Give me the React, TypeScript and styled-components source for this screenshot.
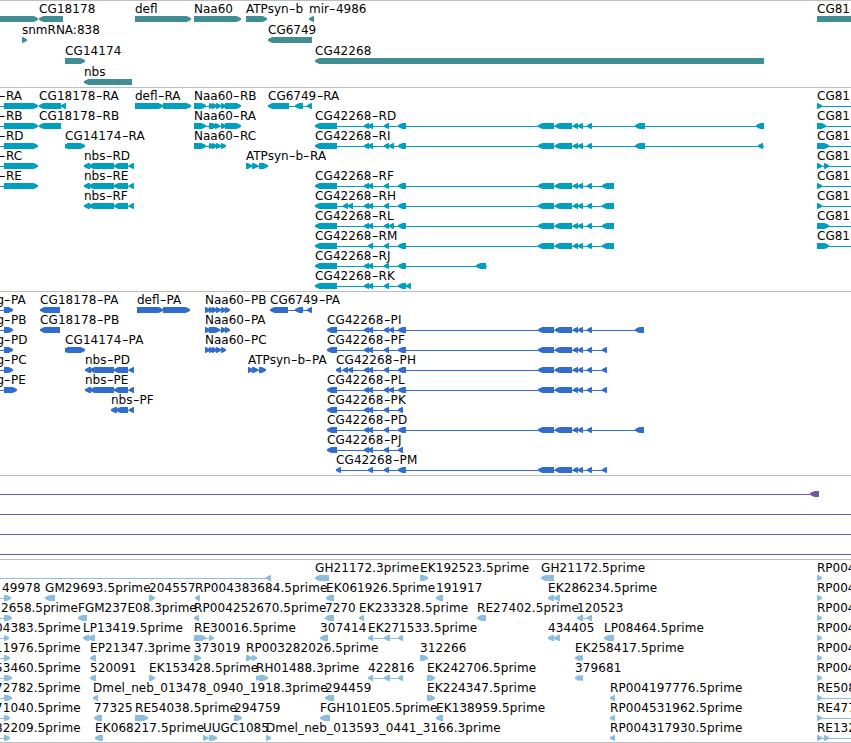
import { Fragment } from "react";
import styled, { createGlobalStyle } from "styled-components";

type Range = [number, number];

interface Feature {
  name?: string;
  strand: "+" | "-";
  exons: Range[];
  // where the label starts, when it is not at the first exon
  labelX?: number;
  // extent of the intron line, when it is longer than the exons
  span?: Range;
}

const VIEW_WIDTH = 851;

const GlobalStyle = createGlobalStyle`
  body {
    margin: 0;
    background: #ffffff;
    overflow: hidden;
  }
`;

const StyledBrowser = styled.main`
  display: flex;
  flex-direction: column;
  width: ${VIEW_WIDTH}px;
  height: 743px;
  overflow: hidden;
  box-sizing: border-box;
  border-bottom: 1px solid #bebebe;
  background: #ffffff;
  font-family: "DejaVu Sans", sans-serif;
  font-size: 12px;
  color: #000000;
`;

const StyledTrack = styled.section<{ $height: number; $color: string }>`
  display: flex;
  flex-direction: column;
  flex: none;
  box-sizing: border-box;
  height: ${(props) => props.$height}px;
  border-top: 1px solid #bebebe;
  color: ${(props) => props.$color};
`;

const StyledRow = styled.div<{ $height: number }>`
  flex: none;
  height: ${(props) => props.$height}px;
`;

const StyledLabels = styled.div`
  position: relative;
  height: 15px;
`;

const StyledLabel = styled.span<{ $x: number; $spacing: number }>`
  position: absolute;
  left: ${(props) => props.$x}px;
  top: 1px;
  line-height: 15px;
  white-space: nowrap;
  letter-spacing: ${(props) => props.$spacing}px;
  color: #000000;
`;

const StyledHyphen = styled.span`
  display: inline-block;
  margin: 0 1.3px;
  transform: scaleX(1.5);
`;

const StyledGlyphs = styled.svg`
  display: block;
  width: 100%;
  height: 5px;
  overflow: visible;
  fill: currentColor;
`;

const minus = (name: string, exons: Range[], extra = {}): Feature => ({
  name,
  strand: "-",
  exons,
  ...extra,
});

const plus = (name: string, exons: Range[], extra = {}): Feature => ({
  name,
  strand: "+",
  exons,
  ...extra,
});

const genes: Feature[][] = [
  [
    plus("", [[-20, 38]]),
    minus("CG18178", [[39, 63]]),
    plus("defl", [[135, 191]]),
    plus("Naa60", [[194, 241]]),
    plus("ATPsyn-b", [[246, 267]]),
    minus("mir-4986", [[309, 314]]),
    plus("CG81", [[817, 880]]),
  ],
  [plus("snmRNA:838", [[22, 27]]), minus("CG6749", [[268, 312]])],
  [plus("CG14174", [[65, 85]]), minus("CG42268", [[315, 764]])],
  [minus("nbs", [[84, 132]])],
];

// exon groups that the CG42268 isoforms share
const pair: Range[] = [[364, 369], [368, 373]];
const single: Range[] = [[384, 389]];
const double: Range[] = [[384, 389], [389, 394]];
const wide: Range[] = [[398, 406]];
const cluster: Range[] = [[538, 554], [555, 572], [573, 578], [578, 583], [587, 592]];
const utr: Range[] = [[315, 337]];
const cds: Range[] = [[327, 337]];
const twin: Range[] = [[343, 348], [348, 353]];

const nbsR: Range[] = [[84, 90], [89, 114], [114, 128], [129, 134]];
const nbsP: Range[] = [[85, 91], [90, 114], [114, 128], [129, 134]];
const naaSmall: Range[] = [[209, 214], [212, 217], [216, 221], [221, 226]];

const left = (name: string, end: number, labelX: number): Feature =>
  plus(name, [[4, end]], { labelX, span: [0, end] });

const right = (name: string, exons: Range[]): Feature =>
  plus(name, exons, { span: [817, VIEW_WIDTH] });

const transcripts: Feature[][] = [
  [
    left("-RA", 38, -1),
    minus("CG18178-RA", [[39, 61], [61, 66]]),
    plus("defl-RA", [[135, 163], [163, 191]]),
    plus("Naa60-RB", [[194, 206], ...naaSmall, [225, 241]]),
    minus("CG6749-RA", [[268, 289], [295, 303], [307, 312]]),
    right("CG81", [[817, 822]]),
  ],
  [
    left("-RB", 38, -1),
    minus("CG18178-RB", [[39, 61]]),
    plus("Naa60-RA", [[194, 206], [209, 217], [215, 220], [221, 226], [225, 241]]),
    minus("CG42268-RD", [...utr, ...pair, ...single, ...wide, ...cluster, [635, 645], [756, 764]]),
    right("CG81", [[817, 826]]),
  ],
  [
    left("-RD", 38, -1),
    plus("CG14174-RA", [[65, 69], [67, 85]]),
    plus("Naa60-RC", [[194, 206], ...naaSmall]),
    minus("CG42268-RI", [...utr, ...pair, ...double, ...wide, ...cluster, [635, 645], [758, 763]], {
      span: [315, 764],
    }),
    right("CG81", [[817, 829]]),
  ],
  [
    left("-RC", 38, -1),
    minus("nbs-RD", nbsR),
    plus("ATPsyn-b-RA", [[246, 252], [252, 258], [259, 268]]),
    right("CG81", [[817, 822], [824, 829]]),
  ],
  [
    left("-RE", 38, -1),
    minus("nbs-RE", nbsR),
    minus("CG42268-RF", [...utr, ...pair, ...single, ...wide, ...cluster, [602, 614]]),
    right("CG81", [[817, 822]]),
  ],
  [
    minus("nbs-RF", nbsR),
    minus("CG42268-RH", [...utr, ...twin, ...pair, ...single, ...wide, ...cluster, [602, 614]]),
    right("CG81", [[817, 822]]),
  ],
  [
    minus("CG42268-RL", [...utr, ...pair, ...double, ...wide, ...cluster, [602, 614]]),
    right("CG81", [[817, 829]]),
  ],
  [
    minus("CG42268-RM", [...utr, [368, 373], ...single, ...wide, ...cluster, [602, 614]]),
    right("CG81", [[817, 829]]),
  ],
  [
    minus("CG42268-RJ", [...utr, ...pair, ...single, ...wide, [476, 486]], {
      span: [315, 487],
    }),
  ],
  [minus("CG42268-RK", [...utr, ...pair, ...single, ...wide, [406, 411]])],
];

const proteins: Feature[][] = [
  [
    left("g-PA", 13, -3.5),
    minus("CG18178-PA", [[40, 60]]),
    plus("defl-PA", [[137, 163], [163, 190]]),
    plus("Naa60-PB", [[205, 210], ...naaSmall, [225, 230]]),
    minus("CG6749-PA", [[270, 288], [295, 303], [307, 312]]),
  ],
  [
    left("g-PB", 13, -3.5),
    minus("CG18178-PB", [[40, 60]]),
    plus("Naa60-PA", [[205, 210], [209, 220], [221, 226], [225, 230]]),
    minus("CG42268-PI", [...cds, ...pair, ...double, ...wide, ...cluster, [635, 644]]),
  ],
  [
    left("g-PD", 13, -3.5),
    plus("CG14174-PA", [[65, 69], [67, 85]]),
    plus("Naa60-PC", [[205, 210], ...naaSmall]),
    minus("CG42268-PF", [...cds, ...pair, ...single, ...wide, ...cluster, [602, 607]]),
  ],
  [
    left("g-PC", 13, -3.5),
    minus("nbs-PD", nbsP),
    plus("ATPsyn-b-PA", [[248, 253], [252, 258], [259, 266]]),
    minus("CG42268-PH", [[336, 341], ...twin, ...pair, ...single, ...wide, ...cluster, [602, 607]]),
  ],
  [
    left("g-PE", 17, -3.5),
    minus("nbs-PE", nbsP),
    minus("CG42268-PL", [...cds, ...pair, ...double, ...wide, ...cluster, [602, 607]]),
  ],
  [
    minus("nbs-PF", [[111, 117], [116, 128], [129, 134]]),
    minus("CG42268-PK", [...cds, ...pair, ...single, [398, 403]]),
  ],
  [minus("CG42268-PD", [...cds, ...pair, ...single, ...wide, ...cluster, [635, 644]])],
  [minus("CG42268-PJ", [...cds, ...pair, ...single, [398, 403]])],
  [minus("CG42268-PM", [[336, 341], [368, 373], ...single, ...wide, ...cluster, [602, 607]])],
];

const wholeLine: Feature[] = [{ strand: "+", exons: [], span: [0, VIEW_WIDTH] }];

const insertions: Feature[][] = [
  [{ strand: "-", exons: [[810, 819]], span: [0, 819] }],
  wholeLine,
  wholeLine,
  wholeLine,
];

const ests: Feature[][] = [
  [
    { strand: "-", exons: [[266, 271]], span: [0, 271] },
    minus("GH21172.3prime", [[315, 329]]),
    plus("EK192523.5prime", [[420, 428]]),
    minus("GH21172.5prime", [[541, 554]]),
    plus("RP004", [[817, 822]]),
  ],
  [
    left("49978", 11, 2),
    minus("GM29693.5prime", [[45, 55]]),
    plus("204557", [[149, 155]]),
    minus("RP004383684.5prime", [[195, 200]]),
    minus("EK061926.5prime", [[326, 334]]),
    minus("191917", [[436, 443]]),
    minus("EK286234.5prime", [[548, 554], [554, 560]]),
    plus("RP004", [[817, 822]]),
  ],
  [
    left("2658.5prime", 12, 1),
    minus("FGM237E08.3prime", [[78, 87]]),
    minus("RP004252670.5prime", [[194, 199]]),
    minus("7270", [[325, 334]]),
    minus("EK233328.5prime", [[359, 364]]),
    minus("RE27402.5prime", [[477, 486]]),
    minus("120523", [[577, 583], [587, 592]]),
    plus("RP004", [[817, 822]]),
  ],
  [
    left("04383.5prime", 9, -5),
    minus("LP13419.5prime", [[83, 89], [88, 95]]),
    plus("RE30016.5prime", [[194, 206], [209, 214]]),
    minus("307414", [[320, 328]]),
    minus("EK271533.5prime", [[368, 373], [384, 390], [398, 403]]),
    minus("434405", [[548, 554], [554, 560]]),
    minus("LP08464.5prime", [[604, 614]]),
    plus("RP004", [[817, 822]]),
  ],
  [
    left("11976.5prime", 10, -5),
    minus("EP21347.3prime", [[90, 96]]),
    plus("373019", [[194, 201]]),
    plus("RP003282026.5prime", [[246, 252], [252, 257]]),
    plus("312266", [[420, 428]]),
    minus("EK258417.5prime", [[575, 580], [578, 583]]),
    plus("RP004", [[817, 822]]),
  ],
  [
    left("53460.5prime", 12, -5),
    minus("520091", [[90, 96]]),
    plus("EK153428.5prime", [[149, 155]]),
    plus("RH01488.3prime", [[256, 260], [259, 268]]),
    minus("422816", [[368, 373], [384, 390], [398, 403]]),
    plus("EK242706.5prime", [[427, 435]]),
    minus("379681", [[575, 580], [578, 583]]),
    plus("RP004", [[817, 822]]),
  ],
  [
    left("72782.5prime", 12, -5),
    minus("Dmel_neb_013478_0940_1918.3prime", [[93, 98]]),
    minus("294459", [[325, 334]]),
    plus("EK224347.5prime", [[427, 435]]),
    minus("RP004197776.5prime", [[610, 615]]),
    right("RE508", [[817, 822]]),
  ],
  [
    left("71040.5prime", 10, -5),
    minus("77325", [[94, 102]]),
    plus("RE54038.5prime", [[135, 148]]),
    plus("294759", [[234, 242]]),
    minus("FGH101E05.5prime", [[320, 330]]),
    minus("EK138959.5prime", [[436, 443]]),
    minus("RP004531962.5prime", [[610, 615]]),
    right("RE477", [[817, 822]]),
  ],
  [
    left("82209.5prime", 10, -5),
    minus("EK068217.5prime", [[95, 103]]),
    plus("UUGC1085", [[203, 208], [209, 217]]),
    plus("Dmel_neb_013593_0441_3166.3prime", [[266, 271]]),
    minus("RP004317930.5prime", [[610, 615]]),
    right("RE132", [[817, 822], [824, 829]]),
  ],
];

const tracks = [
  { id: "genes", height: 87, rowHeight: 21, color: "#408e94", rows: genes },
  { id: "transcripts", height: 204, rowHeight: 20, color: "#009fbf", rows: transcripts },
  { id: "proteins", height: 184, rowHeight: 20, color: "#316dce", rows: proteins },
  { id: "insertions", height: 84, rowHeight: 20, color: "#7357a8", rows: insertions },
  { id: "ests", height: 183, rowHeight: 20, color: "#8abdde", rows: ests },
];

// half outline of an arrow head, from the tip to the shoulder
const HEAD = [
  [0, 2.2],
  [2, 1],
  [4.5, 0],
];

const arrowPoints = ([start, end]: Range, strand: "+" | "-") => {
  const tip = strand === "-" ? start : end;
  const tail = strand === "-" ? end : start;
  const dir = strand === "-" ? 1 : -1;
  const upper = HEAD.map(([x, y]) => `${tip + dir * x},${y}`);
  const lower = HEAD.map(([x, y]) => `${tip + dir * x},${6 - y}`).reverse();
  return [...upper, `${tail},0`, `${tail},6`, ...lower].join(" ");
};

// long runs of digits are set a little wider
const labelSpacing = (name: string) => (/\d{5}/.test(name) || /_/.test(name) ? 0.1 : 0);

const Label: React.FC<{ feature: Feature }> = ({ feature }) => {
  const name = feature.name!;
  return (
    <StyledLabel
      $x={feature.labelX ?? feature.exons[0][0]}
      $spacing={labelSpacing(name)}
    >
      {name.split("-").map((part, i) => (
        <Fragment key={i}>
          {i > 0 && <StyledHyphen>-</StyledHyphen>}
          {part}
        </Fragment>
      ))}
    </StyledLabel>
  );
};

const Glyph: React.FC<{ feature: Feature }> = ({ feature }) => {
  const { exons, strand, span } = feature;
  const [from, to] = span ?? [exons[0][0], exons[exons.length - 1][1]];
  return (
    <g>
      {(span || exons.length > 1) && <rect x={from} y={3} width={to - from} height={1} />}
      {exons.map((exon) => (
        <polygon key={exon[0]} points={arrowPoints(exon, strand)} />
      ))}
    </g>
  );
};

const App: React.FC<{}> = () => {
  return (
    <>
      <GlobalStyle />
      <StyledBrowser>
        {tracks.map((track) => (
          <StyledTrack key={track.id} $height={track.height} $color={track.color}>
            {track.rows.map((row, i) => (
              <StyledRow key={i} $height={track.rowHeight}>
                <StyledLabels>
                  {row
                    .filter((feature) => feature.name)
                    .map((feature) => (
                      <Label key={feature.exons[0][0]} feature={feature} />
                    ))}
                </StyledLabels>
                <StyledGlyphs>
                  {row.map((feature, j) => (
                    <Glyph key={j} feature={feature} />
                  ))}
                </StyledGlyphs>
              </StyledRow>
            ))}
          </StyledTrack>
        ))}
      </StyledBrowser>
    </>
  );
};

export default App;
